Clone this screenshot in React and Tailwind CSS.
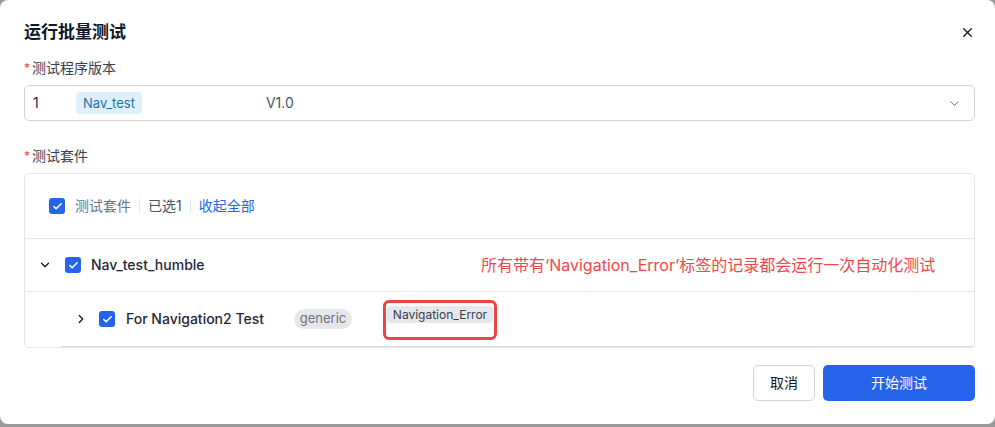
// Batch test run dialog
import { X, ChevronDown, ChevronRight, Check } from "lucide-react";

const font = { fontFamily: '"Inter", "Noto Sans CJK SC", sans-serif' };

const Checkbox = () => (
  <span className="w-4 h-4 rounded-[3px] bg-[#2563eb] flex items-center justify-center shrink-0">
    <Check size={11} strokeWidth={3.5} className="text-white" />
  </span>
);

const Label = ({ children }) => (
  <div className="flex items-center h-5 text-sm text-[#374151]">
    <span className="text-[#ef4444] mr-[2px] text-xs">*</span>
    {children}
  </div>
);

export default function App() {
  return (
    <div className="w-[995px] h-[427px] bg-[#9a9a9a]" style={font}>
      <div className="w-[995px] h-[424px] bg-white rounded-lg pl-6 pr-5">

        {/* ── Header ─────────────────────────────────────────────── */}
        <div className="pt-5 h-11 flex items-start justify-between">
          <h2 className="text-[17px] leading-6 font-semibold text-[#111827]">运行批量测试</h2>
          <X size={15} strokeWidth={2.2} className="text-[#111827] mt-[5px]" />
        </div>

        {/* ── Version ────────────────────────────────────────────── */}
        <div className="mt-[14px]">
          <Label>测试程序版本</Label>
        </div>
        <div className="mt-[7px] h-9 border border-[#d1d5db] rounded-[5px] flex items-center pl-2 pr-3 text-sm text-[#1f2937]">
          <span className="w-[43px]">1</span>
          <span className="h-[22px] px-[7px] rounded-[4px] bg-[#dff0fb] text-[#1a73a8] text-[13px] flex items-center">Nav_test</span>
          <span className="ml-[124px] text-[#4b5563]">V1.0</span>
          <ChevronDown size={15} strokeWidth={1.6} className="ml-auto text-[#6b7280]" />
        </div>

        {/* ── Suites ─────────────────────────────────────────────── */}
        <div className="mt-[25px]">
          <Label>测试套件</Label>
        </div>
        <div className="mt-[7px] border border-[#e5e7eb] rounded-[5px]">
          {/* header row */}
          <div className="h-[65px] flex items-center pl-6 border-b border-[#e5e7eb] text-sm">
            <Checkbox />
            <span className="ml-[10px] text-[#6b7280]">测试套件</span>
            <span className="mx-2 w-px h-[14px] bg-[#e5e7eb]" />
            <span className="text-[#4b5563]">已选1</span>
            <span className="mx-2 w-px h-[14px] bg-[#e5e7eb]" />
            <span className="text-[#2563eb]">收起全部</span>
          </div>

          {/* suite row */}
          <div className="h-[53px] flex items-center pl-[13px] border-b border-[#e5e7eb]">
            <ChevronDown size={14} strokeWidth={2.2} className="text-[#111827]" />
            <span className="ml-[13px]"><Checkbox /></span>
            <span className="ml-[10px] w-[390px] text-sm font-medium text-[#1f2937]">Nav_test_humble</span>
            <span className="text-base text-[#f04848]">所有带有‘Navigation_Error’标签的记录都会运行一次自动化测试</span>
          </div>

          {/* case row */}
          <div className="ml-[36px] h-[55px] flex items-center pl-[13px] border-b border-[#d9dce1]">
            <ChevronRight size={14} strokeWidth={2.2} className="text-[#111827]" />
            <span className="ml-[11px]"><Checkbox /></span>
            <span className="ml-[11px] w-[168px] text-sm font-medium text-[#1f2937]">For Navigation2 Test</span>
            <span className="h-5 w-[58px] rounded-full bg-[#e5e7eb] text-[13px] text-[#6b7280] flex items-center justify-center">generic</span>
            <div className="ml-[31px] mt-[2px] w-[114px] h-10 border-[3px] border-[#ef4444] rounded-md px-[1px] pt-[3px]">
              <span className="h-[17px] rounded-[3px] bg-[#e5e7eb] text-xs text-[#374151] flex items-center justify-center">Navigation_Error</span>
            </div>
          </div>
        </div>

        {/* ── Footer ─────────────────────────────────────────────── */}
        <div className="mt-[17px] flex justify-end gap-2">
          <button className="h-9 w-[62px] border border-[#d1d5db] rounded-[5px] text-sm text-[#111827] bg-white">取消</button>
          <button className="h-9 w-[152px] rounded-[5px] text-sm text-white bg-[#2563eb]">开始测试</button>
        </div>
      </div>
    </div>
  );
}
